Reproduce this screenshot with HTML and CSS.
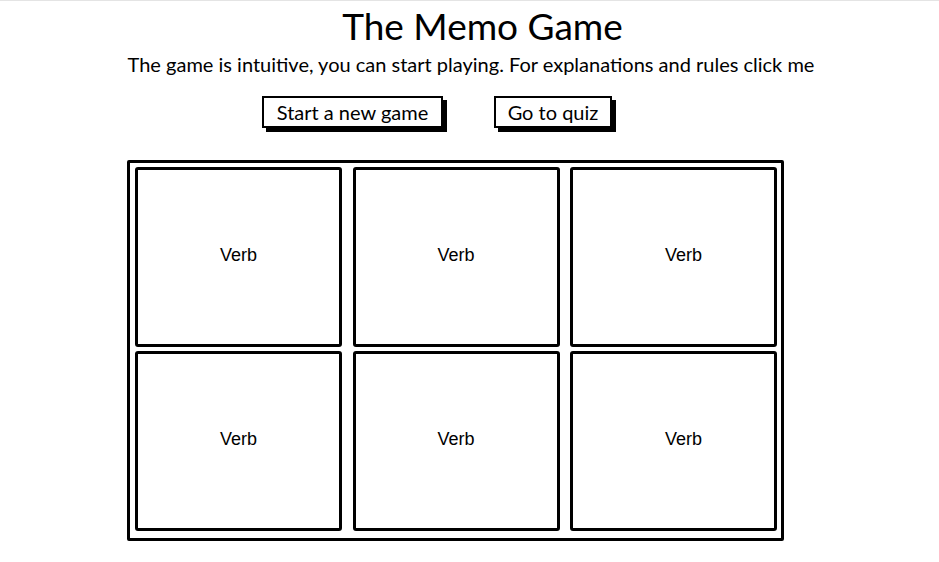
FILE: index.html
```html
<!DOCTYPE html>
<html>
<head>
<meta charset="utf-8">
<link rel="stylesheet" href="styles.css">
</head>
<body>
<div class="page">
  <h1 class="title">The Memo Game</h1>
  <p class="intro">The game is intuitive, you can start playing. For explanations and rules click me</p>
  <div class="actions">
    <button class="btn btn-start">Start a new game</button>
    <button class="btn btn-quiz">Go to quiz</button>
  </div>
  <div class="board">
    <div class="card">Verb</div>
    <div class="card">Verb</div>
    <div class="card">Verb</div>
    <div class="card">Verb</div>
    <div class="card">Verb</div>
    <div class="card">Verb</div>
  </div>
</div>
</body>
</html>
```
FILE: styles.css
```css
html, body {
  margin: 0;
  padding: 0;
  background: #fff;
}
body {
  border-top: 1px solid #e4e4e4;
  font-family: "Lato", "Noto Sans", sans-serif;
  color: #000;
}
.page {
  width: 939px;
  display: flex;
  flex-direction: column;
}
.title {
  margin: 4px 0 0 0;
  padding-left: 26px;
  text-align: center;
  font-size: 37px;
  font-weight: 400;
  line-height: 42px;
}
.intro {
  margin: 5px 0 0 0;
  padding-left: 3px;
  text-align: center;
  font-size: 20px;
  line-height: 24px;
}
.actions {
  display: flex;
  margin: 20px 0 0 262px;
  gap: 51px;
}
.btn {
  font-family: inherit;
  font-size: 20px;
  background: #fff;
  color: #000;
  border: 2px solid #000;
  box-shadow: 4px 4px 0 #000;
  padding: 0;
  height: 32px;
  line-height: 28px;
}
.btn-start { width: 181px; }
.btn-quiz { width: 118px; }
.board {
  margin: 32px 0 0 127px;
  width: 642px;
  border: 3px solid #000;
  border-radius: 2px;
  padding: 4px 4px 7px 5px;
  display: grid;
  grid-template-columns: 207px 207px 207px;
  grid-auto-rows: 180px;
  column-gap: 10.5px;
  row-gap: 4px;
}
.card {
  border: 3px solid #000;
  border-radius: 3px;
  display: flex;
  align-items: center;
  justify-content: center;
  font-family: "Liberation Sans", Arial, sans-serif;
  font-size: 18px;
  padding-bottom: 3px;
}
.card:nth-child(3n) {
  padding-left: 20px;
}
```
